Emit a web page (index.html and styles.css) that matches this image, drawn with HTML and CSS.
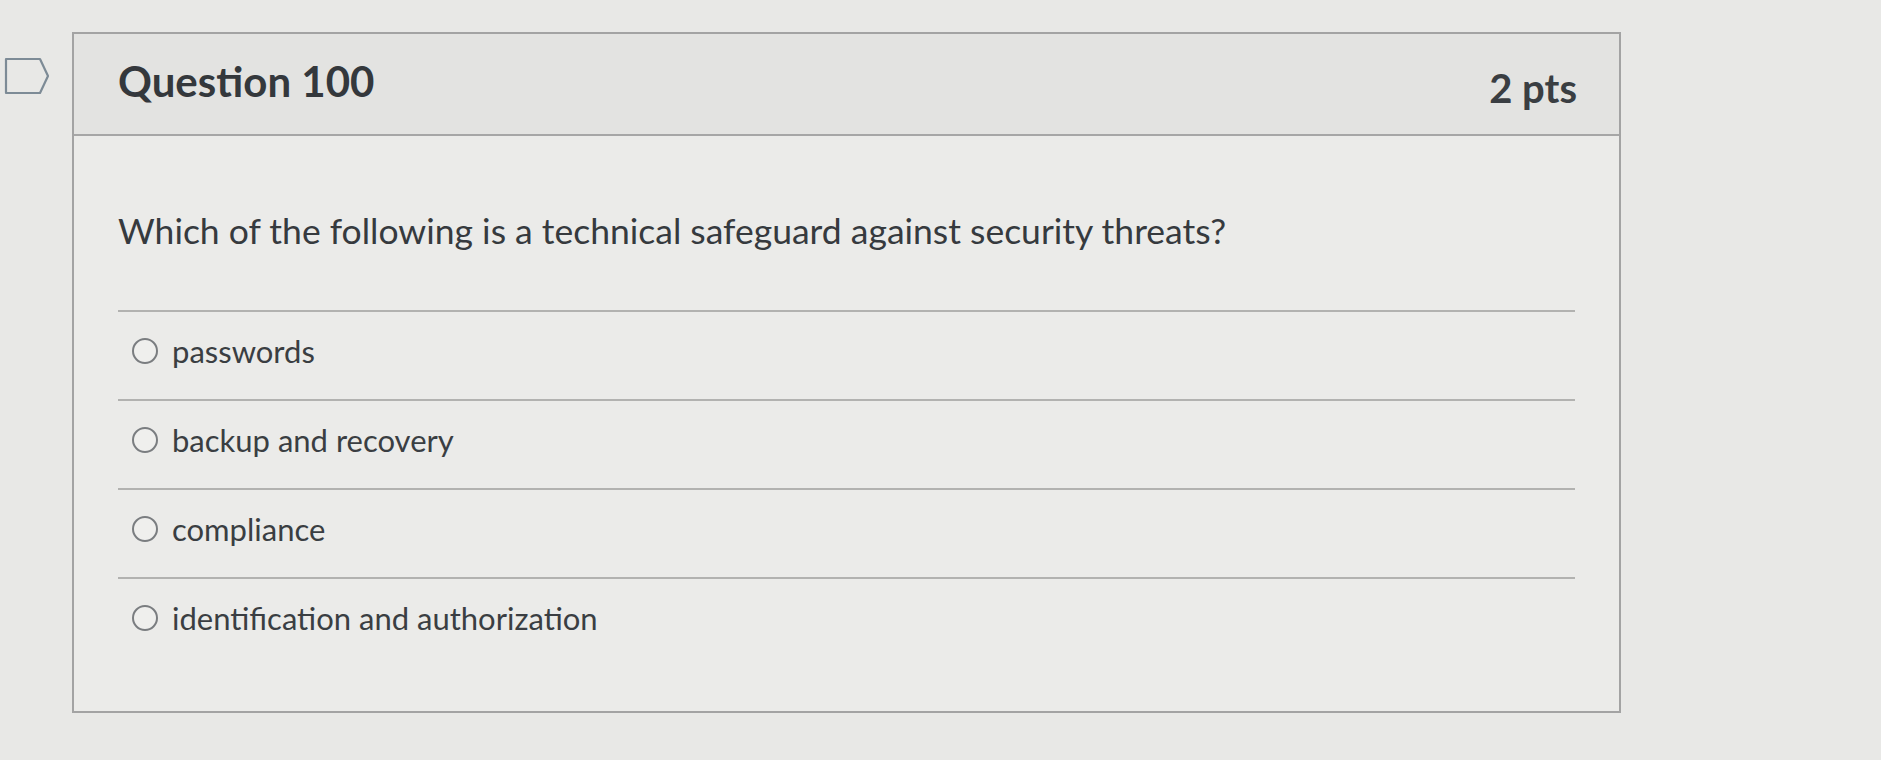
FILE: index.html
```html
<!DOCTYPE html>
<html lang="en">
<head>
<meta charset="utf-8">
<title>Question 100</title>
<link rel="stylesheet" href="styles.css">
</head>
<body>
<div class="page">
  <div class="flag">
    <svg width="46" height="38" viewBox="0 0 46 38" aria-hidden="true">
      <path d="M2 2 H36 L44 19 L36 36 H2 Z" fill="none" stroke="#7d8b96" stroke-width="2.2" stroke-linejoin="round"/>
    </svg>
  </div>
  <div class="card">
    <div class="card-header">
      <h2 class="q-title">Question 100</h2>
      <span class="q-points">2 pts</span>
    </div>
    <div class="card-body">
      <p class="q-text">Which of the following is a technical safeguard against security threats?</p>
      <div class="answers">
        <label class="answer"><span class="radio"></span><span class="answer-text">passwords</span></label>
        <label class="answer"><span class="radio"></span><span class="answer-text">backup and recovery</span></label>
        <label class="answer"><span class="radio"></span><span class="answer-text">compliance</span></label>
        <label class="answer"><span class="radio"></span><span class="answer-text">identification and authorization</span></label>
      </div>
    </div>
  </div>
</div>
</body>
</html>
```

FILE: styles.css
```css
html, body {
  margin: 0;
  padding: 0;
}
body {
  background: #e8e8e6;
  font-family: Lato, "Open Sans", "Liberation Sans", sans-serif;
  color: #363a3e;
  width: 1881px;
  height: 760px;
  overflow: hidden;
}
.page {
  display: flex;
  align-items: flex-start;
  padding: 32px 0 0 4px;
}
.flag {
  width: 46px;
  height: 38px;
  margin-top: 25px;
  margin-right: 22px;
}
.flag svg {
  display: block;
}
.card {
  width: 1549px;
  height: 681px;
  box-sizing: border-box;
  border: 2px solid #a3a3a3;
  background: #ebebe9;
  display: flex;
  flex-direction: column;
}
.card-header {
  height: 100px;
  flex: none;
  background: #e3e3e1;
  border-bottom: 2px solid #a6a6a6;
  display: flex;
  align-items: center;
  justify-content: space-between;
  padding: 0 42px 0 44px;
}
.q-title {
  margin: 0 0 6px;
  font-size: 42px;
  font-weight: 700;
  color: #34383c;
}
.q-points {
  font-size: 40px;
  font-weight: 700;
  color: #3a3e42;
  margin-top: 8px;
}
.card-body {
  padding: 0 44px;
  flex: 1;
}
.q-text {
  margin: 0;
  padding: 72px 0 56px;
  font-size: 35.5px;
  line-height: 46px;
  color: #363a3e;
}
.answers {
  display: flex;
  flex-direction: column;
}
.answer {
  display: flex;
  align-items: center;
  gap: 14px;
  height: 89px;
  border-top: 2px solid #b2b2b0;
  padding: 0 0 9px 14px;
  box-sizing: border-box;
}
.radio {
  width: 26px;
  height: 26px;
  box-sizing: border-box;
  border: 2px solid #7a7d80;
  border-radius: 50%;
  background: #efefed;
  flex: none;
}
.answer-text {
  font-size: 31px;
  color: #3a3e42;
}
```
